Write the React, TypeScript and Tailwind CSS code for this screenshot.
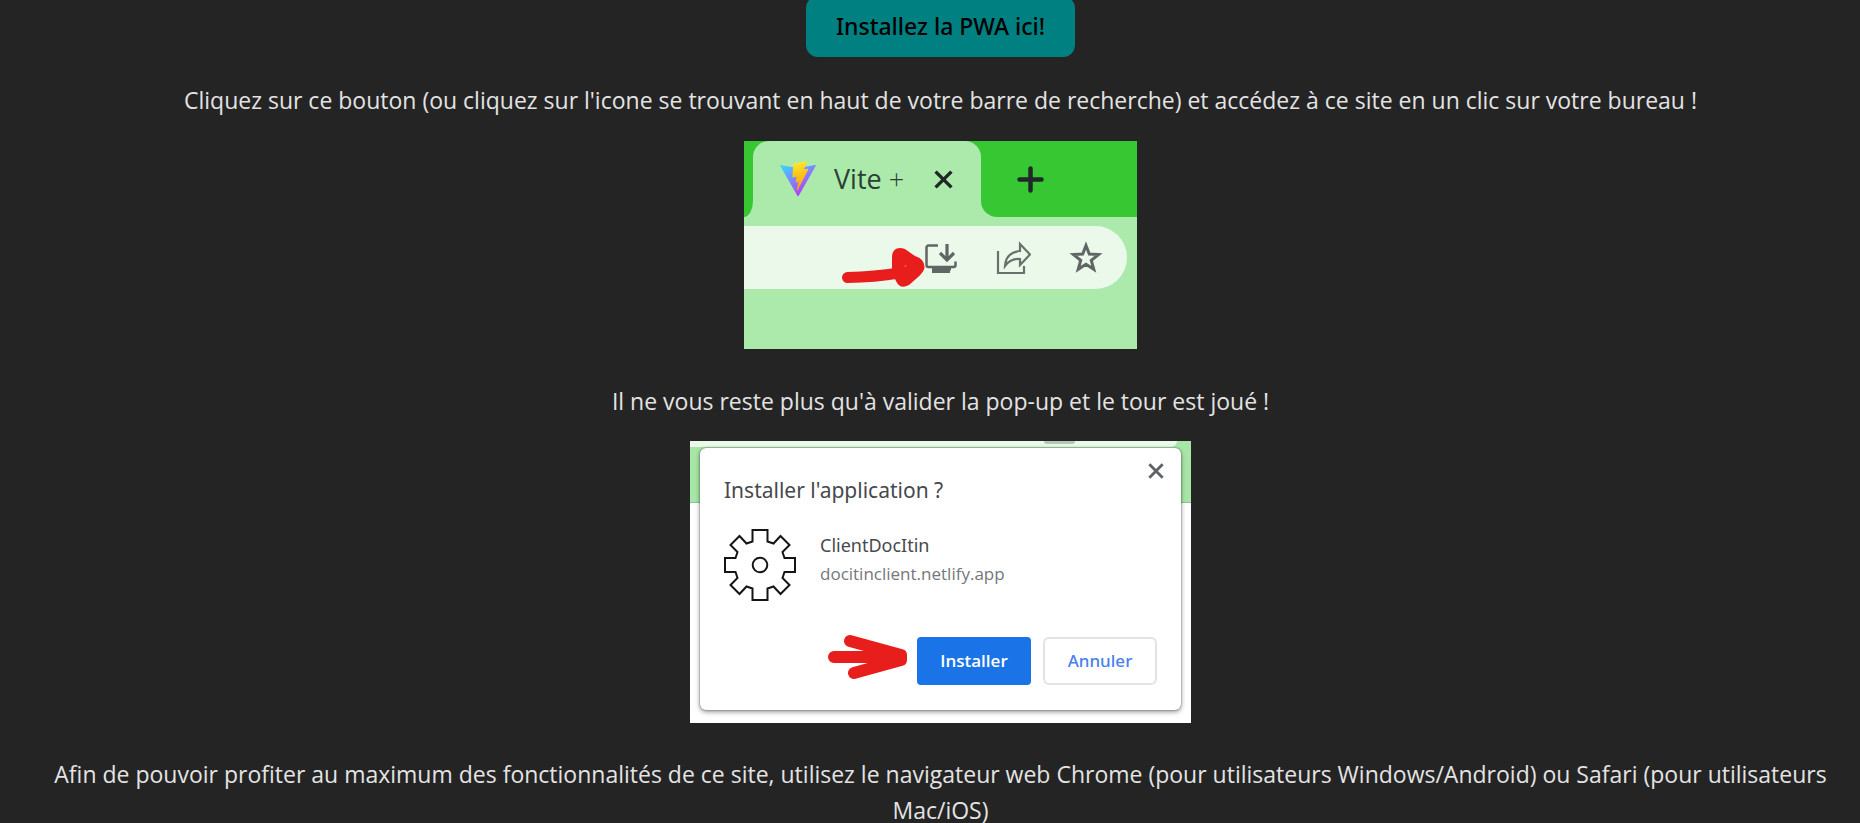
import type { ReactNode } from "react";

function Paragraph({ children }: { children: ReactNode }) {
  return <p className="text-center text-[23px] leading-9">{children}</p>;
}

function ViteLogo() {
  return (
    <svg viewBox="0 0 36 36" className="size-9 shrink-0" aria-hidden="true">
      <defs>
        <linearGradient id="vite-shield" x1="0" y1="0.1" x2="0.6" y2="1">
          <stop offset="0" stopColor="#41d1ff" />
          <stop offset="1" stopColor="#bd34fe" />
        </linearGradient>
        <linearGradient id="vite-bolt" x1="0.5" y1="0" x2="0.6" y2="1">
          <stop offset="0" stopColor="#ffea32" />
          <stop offset="0.3" stopColor="#ffcf1f" />
          <stop offset="1" stopColor="#ff9a10" />
        </linearGradient>
      </defs>
      <path
        d="M.9 4 18 7 35.1 4a.6.6 0 0 1 .6.9L18.6 35a.6.6 0 0 1-1.1 0L.3 4.9A.6.6 0 0 1 .9 4Z"
        fill="url(#vite-shield)"
      />
      <path
        d="M26.5.2 13.6 2.600a.5.5 0 0 0-.4.5l-.8 13a.5.5 0 0 0 .6.5l3.600-.8-1 5.100a.5.5 0 0 0 .6.6l2.200-.7-1.700 8c-.1.6.6.8.9.4L28.300 8.500a.5.5 0 0 0-.5-.7l-3.800.8L27 .8a.5.5 0 0 0-.5-.6Z"
        fill="url(#vite-bolt)"
      />
    </svg>
  );
}

function CloseIcon({ className }: { className: string }) {
  return (
    <svg viewBox="0 0 18 18" className={className} fill="none" stroke="currentColor" strokeWidth="3.2" aria-hidden="true">
      <path d="m1.500 1.500 15 15M16.500 1.500l-15 15" />
    </svg>
  );
}

function InstallIcon() {
  return (
    <svg viewBox="0 0 32 32" className="size-8" aria-hidden="true">
      <path d="M13 3.500H3.500a2 2 0 0 0-2 2V23a2 2 0 0 0 2 2H28.500a2 2 0 0 0 2-2v-3.500" fill="none" stroke="#5f6664" strokeWidth="2.500" />
      <path d="M7 25h19v3.500h-1V31H7Z" fill="#5f6664" />
      <path d="M22 2v15M15 11l7 7 7-7" fill="none" stroke="#5f6664" strokeWidth="3.200" />
    </svg>
  );
}

function ShareIcon() {
  return (
    <svg viewBox="0 0 36 34" className="h-[34px] w-9" fill="none" stroke="#6a706e" strokeWidth="2.200" aria-hidden="true">
      <path d="M3 10v22h26v-7" />
      <path d="M25 3v7C15 11 10.500 17 10 25c4-5.500 8-7.500 15-7v6l10-10.500Z" />
    </svg>
  );
}

function StarIcon() {
  return (
    <svg viewBox="0 0 34 34" className="size-[34px]" fill="none" stroke="#5f6664" strokeWidth="3" aria-hidden="true">
      <path d="m17 4.500 3.300 8.600 9.200.5-7.200 5.700 2.500 9L17 23.300l-7.800 5 2.500-9-7.200-5.700 9.200-.5Z" />
    </svg>
  );
}

function TabPicture() {
  return (
    <figure className="relative h-52 w-[393px] overflow-hidden bg-[#aceaab]" aria-label="Barre d'adresse du navigateur">
      <div className="flex h-[76px]">
        <div className="w-[9px] bg-[#aceaab]">
          <div className="h-full rounded-br-[9px_16px] bg-[#37c733]" />
        </div>
        <div className="w-[228px] bg-[#37c733]">
          <div className="flex h-full items-center rounded-t-2xl bg-[#aceaab] pl-[27px]">
            <ViteLogo />
            <span className="ml-[18px] w-[72px] text-[27px] leading-9 whitespace-nowrap text-[#2b4035]">
              Vite <span className="font-light">+</span>
            </span>
            <CloseIcon className="ml-7 size-[19px] text-[#202825]" />
          </div>
        </div>
        <div className="flex-1 bg-[#aceaab]">
          <div className="flex h-full items-center rounded-bl-2xl bg-[#37c733] pl-9">
            <svg viewBox="0 0 27 27" className="size-[27px]" stroke="#20282a" strokeWidth="4.500" strokeLinecap="round" aria-hidden="true">
              <path d="M13.500 2.500v22M2.500 13.500h22" />
            </svg>
          </div>
        </div>
      </div>
      <div className="mt-[9px] mr-2.5 flex h-[63px] items-center justify-end gap-[38px] rounded-r-full bg-[#ebf9ea] pr-6">
        <InstallIcon />
        <ShareIcon />
        <StarIcon />
      </div>
      <svg viewBox="0 0 90 50" className="absolute top-[102px] left-[95px] h-[50px] w-[90px]" aria-hidden="true">
        <path d="M8.500 34.500Q36 34 60 30" fill="none" stroke="#e81e1c" strokeWidth="11" strokeLinecap="round" />
        <path
          d="M53 15Q53 5 61 5C67 5 71 10 76 13Q86 16 85.500 25Q84 30 78 35L70 42Q61 47 57 38L53 30Z"
          fill="#e81e1c"
        />
        <circle cx="66.500" cy="23" r="1" fill="#ee5b52" />
      </svg>
    </figure>
  );
}

function GearIcon() {
  return (
    <svg viewBox="0 0 72 72" className="size-[72px] shrink-0" fill="none" stroke="#151515" strokeWidth="2" aria-hidden="true">
      <path d="M28.500 1h15v11.500l6 2 7-7.500 9 9-7 7 2 6H71v14H60.500l-2 6 7 7-9 9-7-7.500-6 2V71h-15V59.500l-6-2-7 7.500-9-9 7-7-2-6H1V29h10.500l2-6-7-7 9-9 7 7.500 6-2Z" />
      <circle cx="36" cy="36" r="7.300" />
    </svg>
  );
}

function DialogPicture() {
  return (
    <figure className="relative h-[282px] w-[501px] overflow-hidden bg-white" aria-label="Fenêtre d'installation">
      <div className="absolute inset-x-0 top-0 h-[62px] border-b border-[#8dc48d] bg-[#a8e6a7]">
        <div className="mr-3.5 h-1.5 rounded-br-lg bg-[#ebf9ea]">
          <div className="ml-[354px] h-[3px] w-[31px] rounded-b-full bg-[#b9c4b9]" />
        </div>
      </div>
      <div className="relative mx-2.5 mt-[7px] h-[262px] rounded-md bg-white px-6 pt-6 shadow-[0_2px_5px_rgba(0,0,0,0.4),0_0_2px_rgba(0,0,0,0.5)]">
        <button type="button" aria-label="Fermer" className="absolute top-[15px] right-[17px] text-[#5f6368]">
          <CloseIcon className="size-4" />
        </button>
        <h2 className="font-['Noto_Sans',sans-serif] text-[21px] leading-9 text-[#46494d]">Installer l'application ?</h2>
        <div className="mt-[21px] flex gap-6">
          <GearIcon />
          <div>
            <p className="mt-0.5 font-['Noto_Sans',sans-serif] text-lg leading-7 text-[#46494d]">ClientDocItin</p>
            <p className="text-[17px] leading-[30px] text-[#74777c]">docitinclient.netlify.app</p>
          </div>
        </div>
        <div className="mt-9 flex justify-end gap-3">
          <button type="button" className="h-12 w-[114px] rounded bg-[#1b73e8] text-[17px] font-semibold text-white">
            Installer
          </button>
          <button type="button" className="h-12 w-[114px] rounded-md border-2 border-[#e2e3e8] font-['Noto_Sans',sans-serif] text-[17px] font-medium text-[#4a7fee]">
            Annuler
          </button>
        </div>
      </div>
      <svg viewBox="0 0 82 46" className="absolute top-[193px] left-[137px] h-[46px] w-[82px]" fill="none" stroke="#e81e1c" strokeWidth="12" strokeLinecap="round" strokeLinejoin="round" aria-hidden="true">
        <path d="M7 23h66M23 7l51 14v5L27 39M48 16l22 6-18 7" />
      </svg>
    </figure>
  );
}

export default function App() {
  return (
    <main className="flow-root min-h-screen bg-[#242424] font-['Open_Sans','Noto_Sans',sans-serif] text-[#e3e3e3]">
      <div className="-mt-1 flex flex-col items-center pr-8 pl-[53px]">
        <button type="button" className="rounded-xl bg-[#008080] px-[30px] py-3 font-['Noto_Sans',sans-serif] text-[23px] leading-[37px] font-medium text-black">
          Installez la PWA ici!
        </button>
        <div className="mt-[25px] flex flex-col items-center gap-[23px]">
          <Paragraph>
            Cliquez sur ce bouton (ou cliquez sur l'icone se trouvant en haut de votre barre de recherche) et accédez à ce
            site en un clic sur votre bureau !
          </Paragraph>
          <TabPicture />
        </div>
        <div className="mt-[34px] flex flex-col items-center gap-[22px]">
          <Paragraph>Il ne vous reste plus qu'à valider la pop-up et le tour est joué !</Paragraph>
          <DialogPicture />
        </div>
        <div className="mt-[33px]">
          <Paragraph>
            Afin de pouvoir profiter au maximum des fonctionnalités de ce site, utilisez le navigateur web Chrome (pour
            utilisateurs Windows/Android) ou Safari (pour utilisateurs Mac/iOS)
          </Paragraph>
        </div>
      </div>
    </main>
  );
}
